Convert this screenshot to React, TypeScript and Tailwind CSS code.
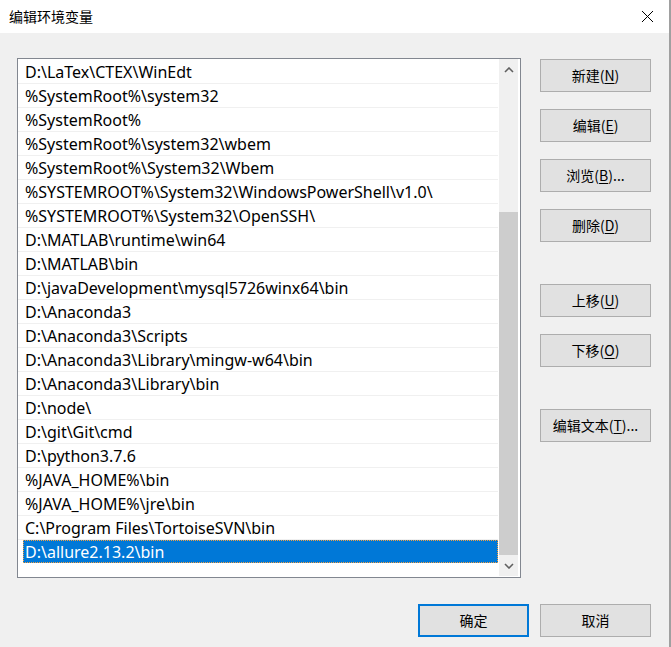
import React from "react";

const paths = [
  "D:\\LaTex\\CTEX\\WinEdt",
  "%SystemRoot%\\system32",
  "%SystemRoot%",
  "%SystemRoot%\\system32\\wbem",
  "%SystemRoot%\\System32\\Wbem",
  "%SYSTEMROOT%\\System32\\WindowsPowerShell\\v1.0\\",
  "%SYSTEMROOT%\\System32\\OpenSSH\\",
  "D:\\MATLAB\\runtime\\win64",
  "D:\\MATLAB\\bin",
  "D:\\javaDevelopment\\mysql5726winx64\\bin",
  "D:\\Anaconda3",
  "D:\\Anaconda3\\Scripts",
  "D:\\Anaconda3\\Library\\mingw-w64\\bin",
  "D:\\Anaconda3\\Library\\bin",
  "D:\\node\\",
  "D:\\git\\Git\\cmd",
  "D:\\python3.7.6",
  "%JAVA_HOME%\\bin",
  "%JAVA_HOME%\\jre\\bin",
  "C:\\Program Files\\TortoiseSVN\\bin",
  "D:\\allure2.13.2\\bin",
];

const cjk = "font-['Noto_Sans_CJK_SC',sans-serif]";

function Btn({ label, keyChar, tail = "", primary = false }: { label: string; keyChar?: string; tail?: string; primary?: boolean }) {
  return (
    <button
      className={`w-[111px] h-[33px] flex items-center justify-center bg-[#e1e1e1] text-[14px] text-black ${cjk} ${
        primary ? "border-2 border-[#0078d7]" : "border border-[#adadad]"
      }`}
    >
      {label}
      {keyChar && (
        <>
          (<span className="underline underline-offset-2">{keyChar}</span>)
        </>
      )}
      {tail}
    </button>
  );
}

function Chevron({ up }: { up: boolean }) {
  return (
    <svg width="10" height="6" viewBox="0 0 10 6">
      <polyline
        points={up ? "1,5 5,1 9,5" : "1,1 5,5 9,1"}
        fill="none"
        stroke="#606060"
        strokeWidth="1.6"
      />
    </svg>
  );
}

export default function App() {
  return (
    <div className="w-[671px] h-[647px] flex flex-col bg-[#f0f0f0] border-r-2 border-[#a0a0a0] overflow-hidden">
      <div className="h-[33px] shrink-0 bg-white flex items-center justify-between pl-[9px] pr-[15px]">
        <span className={`text-[14px] text-black ${cjk}`}>编辑环境变量</span>
        <svg width="13" height="13" viewBox="0 0 13 13">
          <path d="M1 1 L12 12 M12 1 L1 12" stroke="#000" strokeWidth="1" />
        </svg>
      </div>

      <div className="flex pt-[25px] pl-[17px]">
        <div className="w-[504px] h-[520px] border border-[#828790] bg-white flex">
          <div className="w-[480px] pt-[1px] font-['Noto_Sans','Noto_Sans_CJK_SC',sans-serif] text-[16px]">
            {paths.map((p, i) =>
              i === paths.length - 1 ? (
                <div key={i} className="h-[24px]">
                  <div className="ml-[5px] h-[23px] pl-[2px] flex items-center bg-[#0078d7] text-white outline-1 outline-dotted outline-[#f5a040] -outline-offset-1">
                    {p}
                  </div>
                </div>
              ) : (
                <div key={i} className="h-[24px] border-b border-[#f0f0f0] pl-[7px] flex items-center text-black">
                  {p}
                </div>
              )
            )}
          </div>
          <div className="ml-[1px] w-[19px] flex flex-col bg-[#f0f0f0] mb-[1px]">
            <div className="h-[21px] flex items-center justify-center">
              <Chevron up />
            </div>
            <div className="flex-1 flex flex-col justify-end">
              <div className="h-[343px] bg-[#cdcdcd]" />
            </div>
            <div className="h-[21px] flex items-center justify-center">
              <Chevron up={false} />
            </div>
          </div>
        </div>

        <div className="ml-[19px] pt-[1px] flex flex-col">
          <Btn label="新建" keyChar="N" />
          <div className="mt-[17px]">
            <Btn label="编辑" keyChar="E" />
          </div>
          <div className="mt-[17px]">
            <Btn label="浏览" keyChar="B" tail="..." />
          </div>
          <div className="mt-[17px]">
            <Btn label="删除" keyChar="D" />
          </div>
          <div className="mt-[42px]">
            <Btn label="上移" keyChar="U" />
          </div>
          <div className="mt-[17px]">
            <Btn label="下移" keyChar="O" />
          </div>
          <div className="mt-[42px]">
            <Btn label="编辑文本" keyChar="T" tail="..." />
          </div>
        </div>
      </div>

      <div className="flex justify-end gap-[11px] pr-[18px] mt-[26px]">
        <Btn label="确定" primary />
        <Btn label="取消" />
      </div>
    </div>
  );
}
